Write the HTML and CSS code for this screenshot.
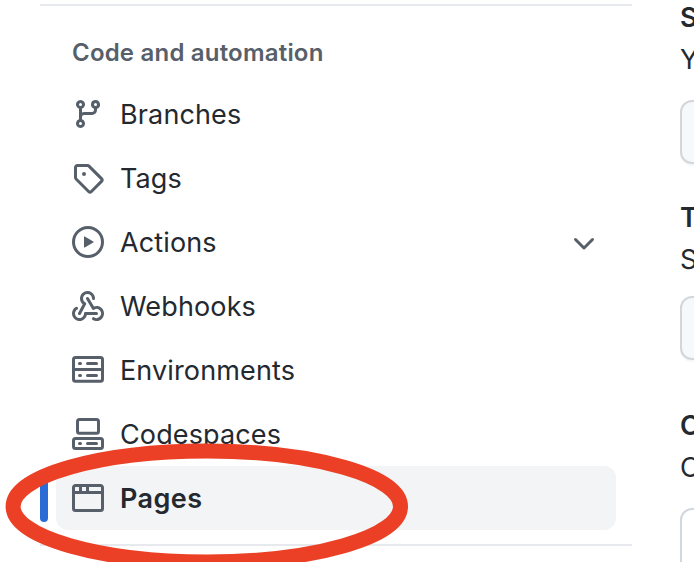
FILE: index.html
```html
<!DOCTYPE html>
<html lang="en">
<head>
<meta charset="utf-8">
<title>Settings</title>
<link rel="stylesheet" href="styles.css">
</head>
<body>
<div class="page">
  <nav class="sidebar">
    <h2 class="heading">Code and automation</h2>
    <ul class="menu">
      <li class="item">
        <svg class="icon" viewBox="0 0 16 16"><path d="M9.5 3.25a2.25 2.25 0 1 1 3 2.122V6A2.5 2.5 0 0 1 10 8.5H6a1 1 0 0 0-1 1v1.128a2.251 2.251 0 1 1-1.5 0V5.372a2.25 2.25 0 1 1 1.5 0v1.836A2.493 2.493 0 0 1 6 7h4a1 1 0 0 0 1-1v-.628A2.25 2.25 0 0 1 9.5 3.25Zm-6 0a.75.75 0 1 0 1.5 0 .75.75 0 0 0-1.5 0Zm8.25-.75a.75.75 0 1 0 0 1.5.75.75 0 0 0 0-1.5ZM4.25 12a.75.75 0 1 0 0 1.5.75.75 0 0 0 0-1.5Z"/></svg>
        <span class="label">Branches</span>
      </li>
      <li class="item">
        <svg class="icon" viewBox="0 0 16 16"><path d="M1 7.775V2.75C1 1.784 1.784 1 2.75 1h5.025c.464 0 .91.184 1.238.513l6.25 6.25a1.75 1.75 0 0 1 0 2.474l-5.026 5.026a1.75 1.75 0 0 1-2.474 0l-6.25-6.25A1.752 1.752 0 0 1 1 7.775Zm1.5 0c0 .066.026.13.073.177l6.25 6.25a.25.25 0 0 0 .354 0l5.025-5.025a.25.25 0 0 0 0-.354l-6.25-6.25a.25.25 0 0 0-.177-.073H2.75a.25.25 0 0 0-.25.25ZM6 5a1 1 0 1 1 0 2 1 1 0 0 1 0-2Z"/></svg>
        <span class="label">Tags</span>
      </li>
      <li class="item">
        <svg class="icon" viewBox="0 0 16 16"><path d="M8 0a8 8 0 1 1 0 16A8 8 0 0 1 8 0ZM1.5 8a6.5 6.5 0 1 0 13 0 6.5 6.5 0 0 0-13 0Zm4.879-2.773 4.264 2.559a.25.25 0 0 1 0 .428l-4.264 2.559A.25.25 0 0 1 6 10.559V5.442a.25.25 0 0 1 .379-.215Z"/></svg>
        <span class="label">Actions</span>
        <svg class="icon chevron" viewBox="0 0 16 16"><path d="M12.78 5.22a.749.749 0 0 1 0 1.06l-4.25 4.25a.749.749 0 0 1-1.06 0L3.22 6.28a.749.749 0 1 1 1.06-1.06L8 8.939l3.72-3.719a.749.749 0 0 1 1.06 0Z"/></svg>
      </li>
      <li class="item">
        <svg class="icon" viewBox="0 0 16 16"><path d="M5.5 4.25a2.25 2.25 0 0 1 4.5 0 .75.75 0 0 0 1.5 0 3.75 3.75 0 1 0-6.14 2.889l-2.272 4.258a.75.75 0 0 0 1.324.706L7 7.25a.75.75 0 0 0-.309-1.015A2.25 2.25 0 0 1 5.5 4.25Z"/><path d="M7.364 3.607a.75.75 0 0 1 1.03.257l2.608 4.349a3.75 3.75 0 1 1-.628 6.785.75.75 0 0 1 .752-1.299 2.25 2.25 0 1 0-.033-3.88.75.75 0 0 1-1.03-.256L7.107 4.636a.75.75 0 0 1 .257-1.03Z"/><path d="M2.9 8.776A.75.75 0 0 1 2.625 9.8 2.25 2.25 0 1 0 6 11.75a.75.75 0 0 1 .75-.751h5.5a.75.75 0 0 1 0 1.5H7.425a3.751 3.751 0 1 1-5.55-3.998.75.75 0 0 1 1.024.274Z"/></svg>
        <span class="label">Webhooks</span>
      </li>
      <li class="item">
        <svg class="icon line" viewBox="0 0 16 16"><rect x=".75" y="1.75" width="14.5" height="11.9" rx="1"/><path d="M1 7.7h14M3.75 4.75h.5M7.75 4.75h4.5M3.75 10.75h.5M7.75 10.75h4.5"/></svg>
        <span class="label">Environments</span>
      </li>
      <li class="item">
        <svg class="icon line" viewBox="0 0 16 16"><rect x="2.75" y=".75" width="10.5" height="6.9" rx="1"/><rect x=".75" y="10.25" width="14.5" height="5" rx="1"/><path d="M3.75 12.75h.5M7.75 12.75h4.5"/></svg>
        <span class="label">Codespaces</span>
      </li>
      <li class="item current">
        <svg class="icon" viewBox="0 0 16 16"><path d="M0 2.75C0 1.784.784 1 1.75 1h12.5c.966 0 1.75.784 1.75 1.75v10.5A1.75 1.75 0 0 1 14.25 15H1.75A1.75 1.75 0 0 1 0 13.25ZM14.5 6h-13v7.25c0 .138.112.25.25.25h12.5a.25.25 0 0 0 .25-.25Zm-6-3.5v2h6V2.75a.25.25 0 0 0-.25-.25ZM5 2.5v2h2v-2Zm-3.25 0a.25.25 0 0 0-.25.25V4.5h2v-2Z"/></svg>
        <span class="label">Pages</span>
      </li>
    </ul>
  </nav>
  <main class="content">
    <section class="field">
      <h3>S</h3>
      <p>Y</p>
      <div class="control"></div>
    </section>
    <section class="field">
      <h3>T</h3>
      <p>S</p>
      <div class="control"></div>
    </section>
    <section class="field">
      <h3>C</h3>
      <p>C</p>
      <div class="control plain"></div>
    </section>
  </main>
  <svg class="marker" viewBox="0 0 694 562"><ellipse cx="206.8" cy="506.5" rx="193.7" ry="55.5"/></svg>
</div>
</body>
</html>
```
FILE: styles.css
```css
* { box-sizing: border-box; }
body {
  margin: 0;
  background: #fff;
  color: #24292f;
  font: 27px/40px Inter, "Liberation Sans", sans-serif;
}
h2, h3, p, ul { margin: 0; padding: 0; }
.page {
  position: relative;
  display: flex;
  gap: 48px;
  width: 694px;
  height: 562px;
  padding-left: 40px;
  overflow: hidden;
}
.sidebar {
  flex: none;
  width: 592px;
  height: 542px;
  margin-top: 4px;
  border-top: 2px solid #e6e9ed;
  border-bottom: 2px solid #e6e9ed;
}
.heading {
  padding: 29px 0 11px 32px;
  color: #57606a;
  font-size: 24px;
  font-weight: 600;
  line-height: 36px;
  letter-spacing: 0.2px;
}
.menu { list-style: none; padding: 0 16px; }
.item {
  position: relative;
  display: flex;
  align-items: center;
  gap: 16px;
  height: 64px;
  padding: 0 16px;
  border-radius: 12px;
}
.label { flex: 1; padding-top: 2px; letter-spacing: 0.13px; }
.icon {
  flex: none;
  width: 32px;
  height: 32px;
  fill: #57606a;
}
.chevron { margin-top: 3px; }
.line {
  fill: none;
  stroke: #57606a;
  stroke-width: 1.5;
  stroke-linecap: round;
}
.current { background: #f3f4f6; font-weight: 600; }
.current .label { letter-spacing: 0.4px; }
.current::before {
  content: "";
  position: absolute;
  left: -16px;
  top: 8px;
  width: 8px;
  height: 48px;
  border-radius: 6px;
  background: #2a6bd6;
}
.content { flex: none; width: 300px; margin-top: -3px; }
.field { height: 200px; }
.field + .field { height: 208px; }
h3 { font-size: 27px; font-weight: 600; line-height: 42px; }
.field p { line-height: 42px; }
.control {
  height: 64px;
  margin-top: 19px;
  border: 2px solid #d3d7db;
  border-radius: 12px;
  background: #f6f8fa;
  box-shadow: 0 2px 0 #f6f7f8;
}
.field + .field .control { margin-top: 15px; }
.field + .field .plain {
  height: 100px;
  margin-top: 19px;
  background: #fff;
  border-color: #d0d7de;
}
.marker {
  position: absolute;
  inset: 0;
  width: 694px;
  height: 562px;
  fill: none;
  stroke: #ec4026;
  stroke-width: 15px;
}
```
